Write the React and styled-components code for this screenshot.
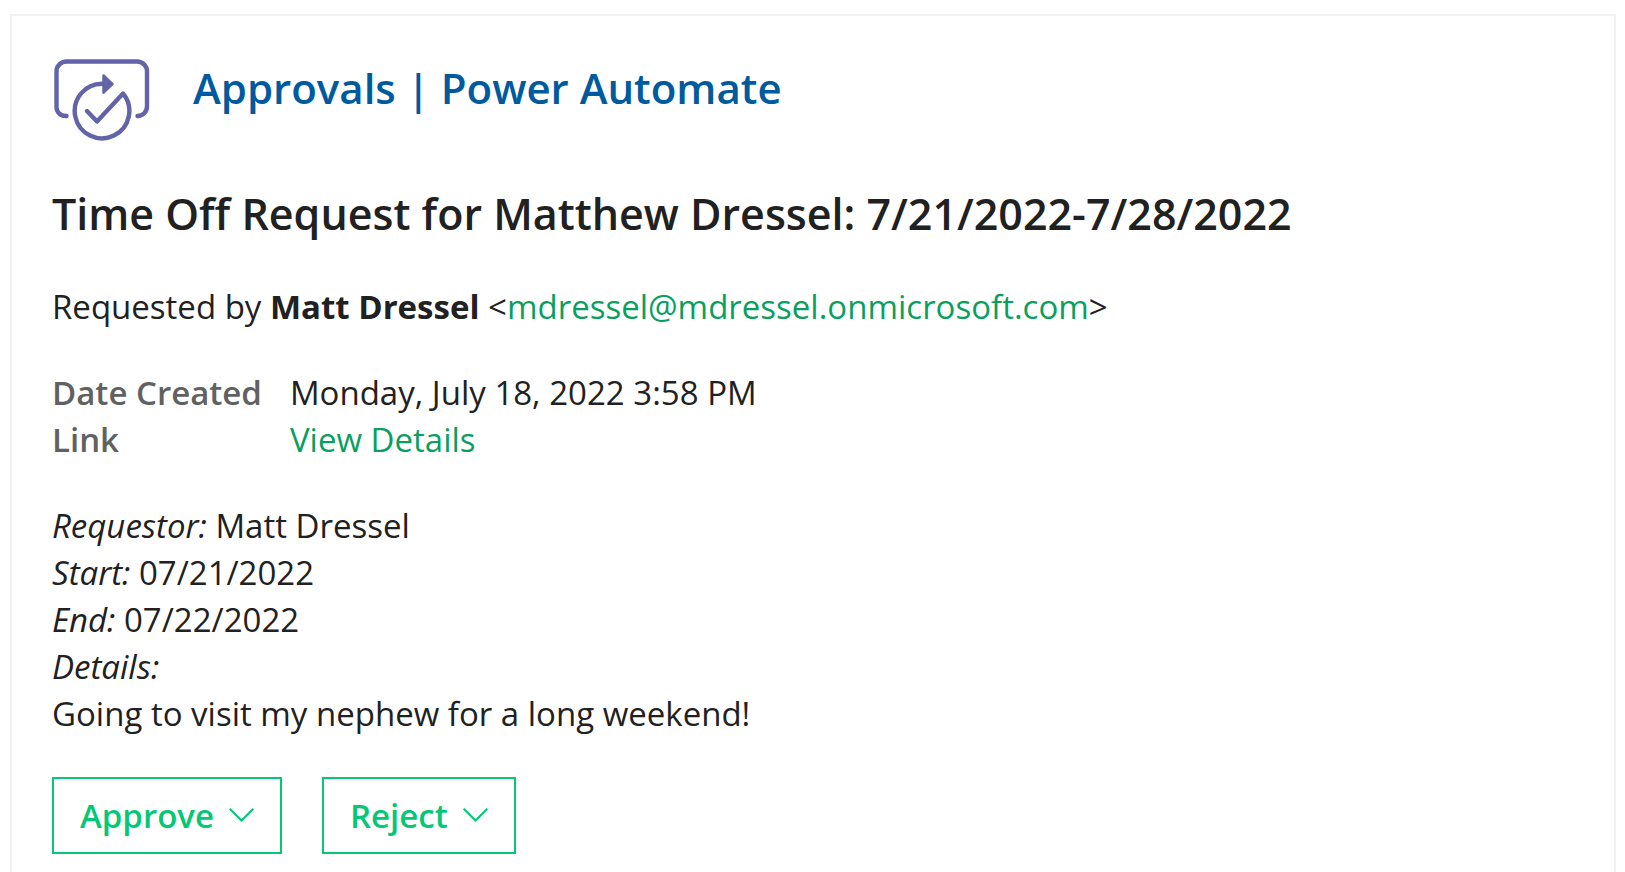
import React from "react";
import styled, { createGlobalStyle } from "styled-components";

const GlobalStyle = createGlobalStyle`
  *, *::before, *::after { box-sizing: border-box; }
  body {
    margin: 0;
    background: #fff;
    color: #212121;
    font-family: "Segoe UI", "Open Sans", "Noto Sans", sans-serif;
    font-size: 33px;
    line-height: 47px;
  }
`;

const Page = styled.div`
  padding: 14px 9px 0 10px;
`;

const Card = styled.main`
  min-height: calc(100vh - 14px);
  padding: 42px 40px 0;
  border: 2px solid #f1f1f1;
  border-bottom: 0;
`;

const CardHeader = styled.header`
  display: flex;
  align-items: flex-start;
  gap: 43px;
  margin-bottom: 42px;
`;

const Logo = styled.svg`
  flex: none;
  width: 98px;
  height: 84px;
`;

const AppName = styled.h1`
  margin: 0;
  font-size: 42px;
  line-height: 60px;
  font-weight: 600;
  color: #005a9e;
`;

const RequestTitle = styled.h2`
  margin: 0;
  font-size: 43px;
  line-height: 60px;
  font-weight: 600;
`;

const Section = styled.section`
  margin-top: 39px;
`;

const Line = styled.p`
  margin: 0;
`;

const Link = styled.a`
  color: #0a9f5f;
  text-decoration: none;
`;

const Fields = styled.dl`
  display: grid;
  grid-template-columns: max-content 1fr;
  column-gap: 28px;
  margin: 39px 0;
`;

const FieldName = styled.dt`
  font-weight: 600;
  color: #616161;
`;

const FieldValue = styled.dd`
  margin: 0;
`;

const Actions = styled.div`
  display: flex;
  gap: 40px;
  margin-top: 40px;
`;

const ActionButton = styled.button`
  display: flex;
  align-items: center;
  gap: 15px;
  padding: 13px 26px 13px 26px;
  border: 2px solid #05c776;
  background: #fff;
  color: #05c776;
  font: inherit;
  font-weight: 600;
  cursor: pointer;
`;

const ChevronIcon = styled.svg`
  width: 25px;
  height: 15px;
`;

function ApprovalsLogo() {
  return (
    <Logo viewBox="52 58 98 84" fill="none" stroke="#6264a7" strokeWidth="4.4" strokeLinecap="round" strokeLinejoin="round" aria-hidden="true">
      <path d="M66.500 116H65.500a9 9 0 0 1-9-9V71.500a10 10 0 0 1 10-10H137a10 10 0 0 1 10 10V106.500a9.500 9.500 0 0 1-9.500 9.500" />
      <path d="M103 83.700A27.300 27.300 0 1 0 123 93.500L97 121.500L87 111" />
      <path d="M103.500 75.500L112.500 84.200L103.500 92.700Z" fill="#6264a7" strokeWidth="2.500" />
    </Logo>
  );
}

function Action({ children }) {
  return (
    <ActionButton type="button" aria-haspopup="true">
      {children}
      <ChevronIcon viewBox="0 0 25 15" fill="none" stroke="currentColor" strokeWidth="2" aria-hidden="true">
        <path d="M0.700 0.700L12.500 12.500L24.300 0.700" />
      </ChevronIcon>
    </ActionButton>
  );
}

export default function App() {
  return (
    <>
      <GlobalStyle />
      <Page>
        <Card>
          <CardHeader>
            <ApprovalsLogo />
            <AppName>Approvals | Power Automate</AppName>
          </CardHeader>
          <RequestTitle>Time Off Request for Matthew Dressel: 7/21/2022-7/28/2022</RequestTitle>
          <Section>
            <Line>
              Requested by <b>Matt Dressel</b> &lt;
              <Link href="mailto:mdressel@mdressel.onmicrosoft.com">mdressel@mdressel.onmicrosoft.com</Link>&gt;
            </Line>
            <Fields>
              <FieldName>Date Created</FieldName>
              <FieldValue>Monday, July 18, 2022 3:58 PM</FieldValue>
              <FieldName>Link</FieldName>
              <FieldValue>
                <Link href="#details">View Details</Link>
              </FieldValue>
            </Fields>
            <Line><em>Requestor:</em> Matt Dressel</Line>
            <Line><em>Start:</em> 07/21/2022</Line>
            <Line><em>End:</em> 07/22/2022</Line>
            <Line><em>Details:</em></Line>
            <Line>Going to visit my nephew for a long weekend!</Line>
          </Section>
          <Actions>
            <Action>Approve</Action>
            <Action>Reject</Action>
          </Actions>
        </Card>
      </Page>
    </>
  );
}
